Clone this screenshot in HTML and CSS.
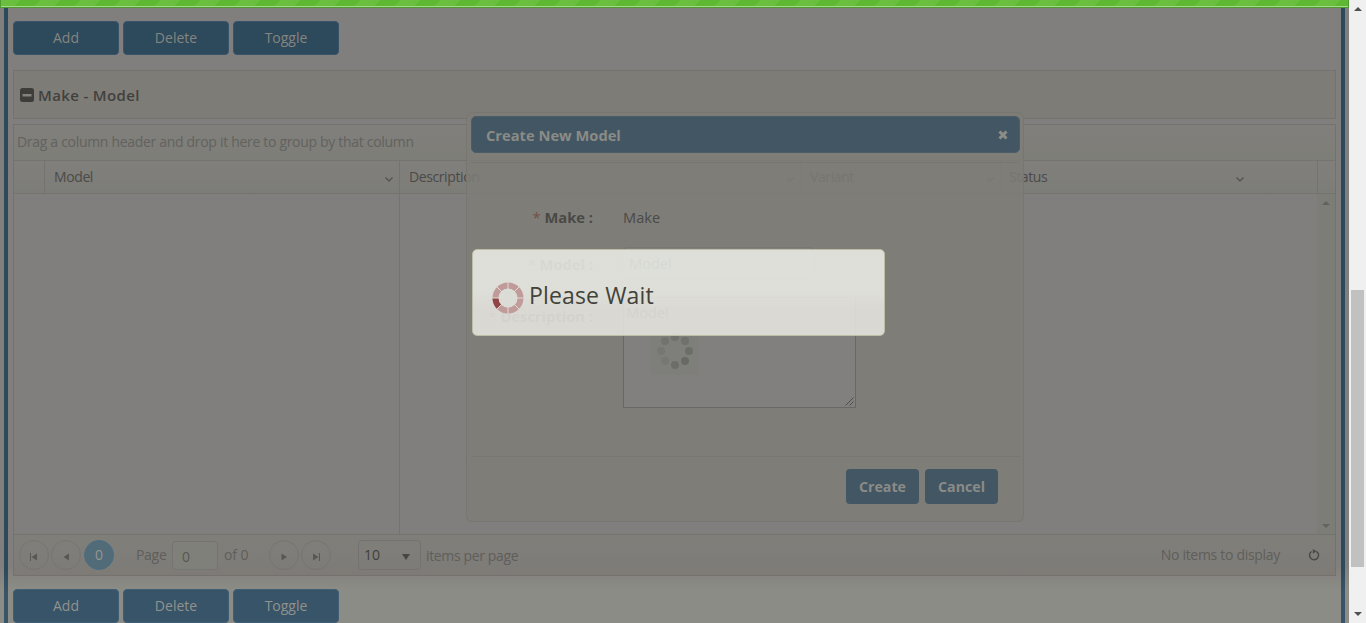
FILE: index.html
```html
<!DOCTYPE html>
<html lang="en">
<head>
<meta charset="utf-8">
<title>Make - Model</title>
<link rel="stylesheet" href="styles.css">
</head>
<body>
<div class="app">
  <div class="progress"></div>
  <main class="frame">
    <div class="toolbar">
      <button class="btn"><span>Add</span></button><button class="btn"><span>Delete</span></button><button class="btn"><span>Toggle</span></button>
    </div>
    <section class="panel">
      <svg class="minus" viewBox="0 0 14 14"><rect width="14" height="14" rx="2.5" fill="#3f3d39"/><rect x="2.5" y="6" width="9" height="2.5" fill="#85827e"/></svg>
      <h2><span>Make - Model</span></h2>
    </section>
    <section class="grid">
      <div class="group-hint"><span>Drag a column header and drop it here to group by that column</span></div>
      <div class="cols head">
        <div></div>
        <div class="th"><span>Model</span><svg viewBox="0 0 8 5"><path d="M.5.5 4 4 7.500.500"/></svg></div>
        <div class="th"><span>Description</span><svg viewBox="0 0 8 5"><path d="M.5.5 4 4 7.500.500"/></svg></div>
        <div class="th"><span>Variant</span><svg viewBox="0 0 8 5"><path d="M.5.5 4 4 7.500.500"/></svg></div>
        <div class="th status"><span>Status</span><svg viewBox="0 0 8 5"><path d="M.5.5 4 4 7.500.500"/></svg></div>
        <div></div>
      </div>
      <div class="body">
        <div class="first"></div>
        <div class="rest"></div>
        <div class="track"><i class="up"></i><i class="down"></i></div>
      </div>
      <div class="pager">
        <div class="round"><svg viewBox="0 0 10 10"><path d="M1 1h1v8H1zM8 1.500v7L2.500 5z"/></svg></div>
        <div class="round"><svg viewBox="0 0 10 10"><path d="M8 1.500v7L2.500 5z"/></svg></div>
        <div class="round current"><span>0</span></div>
        <span class="label page">Page</span>
        <div class="num"><span>0</span></div>
        <span class="label of">of 0</span>
        <div class="round next"><svg viewBox="0 0 10 10"><path d="M2.500 1.500v7L8 5z"/></svg></div>
        <div class="round"><svg viewBox="0 0 10 10"><path d="M8 1h1v8H8zM2 1.500v7L7.500 5z"/></svg></div>
        <div class="select"><span>10</span><i></i></div>
        <span class="label items">items per page</span>
        <span class="label none">No items to display</span>
        <svg class="refresh" viewBox="0 0 12 12"><path d="M8.300 2.300A4.500 4.500 0 1 1 3.500 2.500" fill="none" stroke="#4b4a47" stroke-width="1.500"/><path d="M4.800 0v4.800L8.500 2.300z" fill="#4b4a47"/></svg>
      </div>
    </section>
    <div class="toolbar lower">
      <button class="btn"><span>Add</span></button><button class="btn"><span>Delete</span></button><button class="btn"><span>Toggle</span></button>
    </div>
  </main>

  <div class="modal">
    <header><span>Create New Model</span><svg viewBox="0 0 10 10"><path d="M1.500 1.500l7 7m0-7l-7 7"/></svg></header>
    <div class="form">
      <div class="row r1"><label><b>*</b> <span>Make :</span></label><p><span>Make</span></p></div>
      <div class="row r2"><label><b>*</b> <span>Model :</span></label><div class="input"><span>Model</span></div></div>
      <div class="row r3"><label><b>*</b> <span>Description :</span></label>
        <div class="area"><span>Model</span>
          <div class="dots"><svg viewBox="0 0 48 48"><circle cx="24" cy="10" r="4" opacity=".5"/><circle cx="34" cy="14" r="4" opacity=".5"/><circle cx="38" cy="24" r="4" opacity=".65"/><circle cx="34" cy="34" r="4" opacity=".75"/><circle cx="24" cy="38" r="4" opacity=".65"/><circle cx="14" cy="34" r="4" opacity=".25"/><circle cx="10" cy="24" r="4" opacity=".3"/><circle cx="14" cy="14" r="4" opacity=".4"/></svg></div>
          <svg class="grip" viewBox="0 0 9 9"><path d="M.5 8.500l8-8M4.500 8.500l4-4"/></svg>
        </div>
      </div>
    </div>
    <footer><button><span>Create</span></button><button><span>Cancel</span></button></footer>
  </div>

  <div class="wait">
    <svg viewBox="0 0 32 32"><circle cx="16" cy="16" r="12.500" fill="none" stroke="#c09b99" stroke-width="6"/><path d="M3.500 16A12.500 12.500 0 0 0 7.200 24.800" fill="none" stroke="#914544" stroke-width="6"/><path d="M16 0v32M0 16h32M4.700 4.700l22.600 22.600M27.300 4.700L4.700 27.300" stroke="#dcdcd6" stroke-width="1"/><circle cx="16" cy="16" r="9.300" fill="#dcdcd6"/></svg>
    <span>Please Wait</span>
  </div>
</div>
<div class="scroll"><i class="up"></i><div class="thumb"></div><i class="down"></i></div>
</body>
</html>
```
FILE: styles.css
```css
* { box-sizing: border-box; }
html, body { margin: 0; height: 623px; overflow: hidden; }
body { display: flex; font: 14px/20px "Open Sans", "Noto Sans", sans-serif; background: #817f7d; color: #4b4a48; }
button { font: inherit; border: 0; padding: 0; margin: 0; }
h2, p { margin: 0; }
i { display: block; width: 0; height: 0; border: 4px solid transparent; }
i.up { border-top: 0; border-bottom-color: #62625e; }
i.down { border-bottom: 0; border-top-color: #62625e; }

.app { position: relative; width: 1349px; height: 623px; background: linear-gradient(#817f7d 0 565px, #8c8c86 590px); }
.progress { height: 8px; border: solid #4f9a2e; border-width: 0 1px 1px; box-shadow: inset 0 -1px #a3d98a;
  background: repeating-linear-gradient(135deg, #6bbf3f 0 14.140px, #5fb832 14.140px 28.280px); }
.frame { height: 615px; margin: 0 4px; padding: 13px 5px 0; border: solid #2d495c; border-width: 0 4px;
  border-image: linear-gradient(#2d495c 0 560px, #385468 585px) 1; border-image-width: 0 4px; }

.toolbar { display: flex; gap: 4px; margin-bottom: 15px; }
.btn { width: 106px; height: 34px; border: 1px solid #38536a; border-radius: 4px; background: #2d495c; color: #85857f; }
.lower .btn { background: #385468; border-color: #3f5d75; color: #92928c; }
.lower { margin: 13px 0 0; }

.panel { display: flex; align-items: center; gap: 4px; height: 49px; padding: 0 6px; border: 1px solid #73726f; background: #7e7c77; }
.minus { width: 14px; height: 14px; margin-top: 1px; }
h2 { font-size: 15px; font-weight: 600; letter-spacing: .35px; color: #42413d; line-height: 20px; }

.grid { height: 452px; margin-top: 5px; border: 1px solid #73726f; display: flex; flex-direction: column; }
.group-hint { height: 35px; padding: 7px 3px; color: #62625e; background: linear-gradient(#807f7c, #7e7e78); letter-spacing: -.31px; }
.cols { display: grid; grid-template-columns: 31px 355px 401px 200px 317px 1fr; height: 34px; border: solid #747370; border-width: 1px 0; background: linear-gradient(#807f7c, #7d7d78); }
.cols > div { border-right: 1px solid #747370; }
.cols > div:last-child { border: 0; }
.th { display: flex; justify-content: space-between; padding: 6px 6px 6px 9px; letter-spacing: -.4px; }
.th svg { width: 8px; height: 5px; margin-top: 10px; fill: none; stroke: #555450; stroke-width: 1.400; }
.th.status { padding-right: 73px; padding-left: 8px; }
.body { flex: 1; display: flex; }
.first { width: 386px; border-right: 1px solid #747370; }
.rest { flex: 1; }
.track { width: 18px; display: flex; flex-direction: column; justify-content: space-between; align-items: center; padding: 7px 0 6px; background: #7d7d78; }
.pager { height: 41px; display: flex; align-items: center; padding: 0 15px 0 5px; border-top: 1px solid #747370; background: linear-gradient(#7f7f7a, #7e7b77); }
.round { flex: none; width: 30px; height: 30px; margin-right: 2px; border: 1px solid #767571; border-radius: 50%; display: flex; align-items: center; justify-content: center; }
.round svg { width: 10px; height: 10px; margin-top: 3px; fill: #585753; }
.current { background: #516b79; border-color: #4b6d81; color: #96958f; margin: 0 22px 0 1px; }
.label { color: #5f5e5b; white-space: nowrap; margin-top: -1px; }
.page { width: 36px; letter-spacing: -.3px; }
.num { width: 46px; height: 29px; margin-right: 6px; padding: 5px 9px; border: 1px solid #757470; border-radius: 4px; color: #575753; background: #80807a; }
.of { width: 45px; letter-spacing: -.1px; }
.select { width: 63px; height: 30px; margin: 0 6px 0 25px; padding: 4px 5px; border: 1px solid #737270; border-radius: 4px; display: flex; justify-content: space-between; color: #3f403d; }
.select i { border-bottom: 0; border-top: 6px solid #454744; margin: 9px 5px 0; }
.items { letter-spacing: -.36px; margin-top: 1px; margin-left: -1px; }
.none { margin-left: auto; letter-spacing: -.3px; }
.refresh { width: 12px; height: 12px; margin-left: 28px; }

.modal { position: absolute; left: 466px; top: 112px; width: 558px; height: 410px; padding: 4px; border: 1px solid #777670; border-radius: 6px; background: rgba(126,125,119,.86); }
.modal header { height: 37px; margin-top: -1px; width: 549px; display: flex; justify-content: space-between; align-items: center; padding: 0 11px 0 14px; border-radius: 5px; background: #435664; color: #8b8b86; font-size: 14.700px; font-weight: 700; border: 1px solid #4c5d68; }
.modal header svg { width: 10px; height: 10px; margin-top: 1px; stroke: #8d8d88; stroke-width: 3; }
.form { height: 295px; margin-top: 9px; border: solid #777671; border-width: 1px 0; }
.row { display: flex; gap: 30px; }
.row label { width: 122px; text-align: right; color: #4a4946; font-size: 14.700px; font-weight: 700; white-space: nowrap; }
.row b { font-weight: 400; color: #74504b; }
.row p, .input, .area { font-size: 14.600px; }
.r1 { padding-top: 44px; }
.r2 { padding-top: 20px; align-items: center; }
.r2 label { padding-top: 2px; }
.r3 { padding-top: 18px; }
.r3 label { padding-top: 9px; }
.input { width: 191px; height: 32px; padding: 5px 5px; border: 1px solid #797774; border-radius: 4px; background: #82807e; }
.area { position: relative; width: 233px; height: 111px; padding: 4px 2px; border: 1px solid #686866; background: #81807e; }
.dots { position: absolute; left: 27px; top: 29px; width: 48px; height: 48px; border-radius: 4px; background: #7e7e7b; fill: #62635f; }
.dots svg, .grip { display: block; }
.grip { position: absolute; right: 1px; bottom: 1px; width: 9px; height: 9px; stroke: #4e4e4b; stroke-width: 1; }
.modal footer { display: flex; justify-content: flex-end; gap: 6px; padding: 12px 21px; }
.modal footer button { width: 73px; height: 35px; padding-top: 1px; border-radius: 4px; background: #435664; color: #8b8b86; font-size: 14.200px; font-weight: 700; }

.wait { position: absolute; left: 472px; top: 249px; width: 413px; height: 87px; display: flex; padding: 33px 19px; gap: 5px; border: 1px solid #bebda5; border-radius: 5px; background: linear-gradient(rgba(235,237,230,.87) 50%, rgba(232,230,224,.87) 68%); color: #42423a; font-size: 23px; font-weight: 500; letter-spacing: .15px; line-height: 28px; }
.wait svg { width: 32px; height: 32px; margin-top: -1px; }
.wait span { margin-top: -2px; }

.scroll { width: 17px; height: 623px; display: flex; flex-direction: column; align-items: center; background: #f0f0f0; padding: 7px 0; }
.scroll i.up { border-bottom-color: #505050; }
.scroll i.down { border-top-color: #505050; margin-top: auto; }
.thumb { width: 13px; height: 277px; margin-top: 279px; background: #c1c1c1; }
```
